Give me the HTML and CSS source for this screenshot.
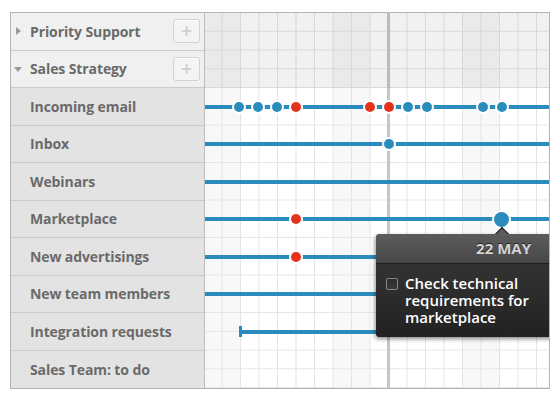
FILE: index.html
```html
<!DOCTYPE html>
<html lang="en">
<head>
  <meta charset="UTF-8">
  <title>Sales Strategy Timeline</title>
  <link rel="stylesheet" href="styles.css">
</head>
<body>
  <div class="gantt">
    <div class="sidebar">
      <div class="row group">
        <span class="caret caret-right"></span>
        <span class="label">Priority Support</span>
        <button class="add">+</button>
      </div>
      <div class="row group">
        <span class="caret caret-down"></span>
        <span class="label">Sales Strategy</span>
        <button class="add">+</button>
      </div>
      <div class="row"><span class="label">Incoming email</span></div>
      <div class="row"><span class="label">Inbox</span></div>
      <div class="row"><span class="label">Webinars</span></div>
      <div class="row"><span class="label">Marketplace</span></div>
      <div class="row"><span class="label">New advertisings</span></div>
      <div class="row"><span class="label">New team members</span></div>
      <div class="row"><span class="label">Integration requests</span></div>
      <div class="row"><span class="label">Sales Team: to do</span></div>
    </div>

    <div class="chart">
      <div class="today"></div>
      <div class="lane group"></div>
      <div class="lane group"></div>
      <div class="lane">
        <div class="bar"></div>
        <span class="dot" style="left:34px"></span>
        <span class="dot" style="left:53px"></span>
        <span class="dot" style="left:72px"></span>
        <span class="dot red" style="left:91px"></span>
        <span class="dot red" style="left:165px"></span>
        <span class="dot red" style="left:184px"></span>
        <span class="dot" style="left:203px"></span>
        <span class="dot" style="left:222px"></span>
        <span class="dot" style="left:278px"></span>
        <span class="dot" style="left:297px"></span>
      </div>
      <div class="lane">
        <div class="bar"></div>
        <span class="dot" style="left:184px"></span>
      </div>
      <div class="lane">
        <div class="bar"></div>
      </div>
      <div class="lane">
        <div class="bar"></div>
        <span class="dot red" style="left:91px"></span>
        <span class="dot big" style="left:296px"></span>
      </div>
      <div class="lane">
        <div class="bar"></div>
        <span class="dot red" style="left:91px"></span>
      </div>
      <div class="lane">
        <div class="bar"></div>
      </div>
      <div class="lane">
        <div class="bar" style="left:35px"></div>
        <span class="tick" style="left:34px"></span>
      </div>
      <div class="lane"></div>

      <div class="tooltip">
        <div class="tooltip-head">22 MAY</div>
        <label class="tooltip-body">
          <input type="checkbox">
          <span>Check technical requirements for marketplace</span>
        </label>
      </div>
    </div>
  </div>
</body>
</html>
```

FILE: styles.css
```css
html, body {margin:0; padding:0; background:#fff; font-family:"Open Sans",Arial,sans-serif;}
.gantt {display:flex; width:538px; height:375px; margin:12px 0 0 10px; border:1px solid #b4b4b4;}

.sidebar {width:193px; flex:none; display:flex; flex-direction:column; border-right:1px solid #bdbdbd; background:#e3e3e3;}
.row {height:36.5px; flex:none; display:flex; align-items:center; padding-left:19px; border-bottom:1px solid #cbcbcb; color:#6a6a6a; font-size:14px; font-weight:700; letter-spacing:-0.1px; position:relative;}
.row:last-child {border-bottom:none; height:37.5px;}
.row.group {background:#f0f0f0;}
.label {flex:1; white-space:nowrap;}
.caret {position:absolute; left:5px; top:50%; width:0; height:0;}
.caret-right {margin-top:-4px; border-left:5px solid #9a9a9a; border-top:4px solid transparent; border-bottom:4px solid transparent;}
.caret-down {margin-top:-2px; left:3px; border-top:5px solid #9a9a9a; border-left:4px solid transparent; border-right:4px solid transparent;}
.add {width:27px; height:24px; margin-right:4px; padding:0; border:1px solid #d2d2d2; border-radius:3px; background:#f4f4f4; color:#cfcfcf; font-family:"DejaVu Sans",sans-serif; font-size:15px; font-weight:700; line-height:20px; box-shadow:inset 0 1px 0 #fff;}

.chart {flex:1; position:relative; overflow:hidden; display:flex; flex-direction:column;
  background-color:#fff;
  background-image:
    linear-gradient(to right, #e4e4e4 1px, transparent 1px),
    linear-gradient(to top, #e6e6e6 1px, transparent 1px),
    linear-gradient(to right, #f8f8f8 37px, transparent 37px);
  background-size:18.5px 100%, 100% 18.75px, 129.5px 100%;
  background-position:16.5px 0, 0 0, 128px 0;}
.today {position:absolute; left:182px; top:0; bottom:0; width:3px; background:#c6c6c6;}
.lane {height:37.5px; flex:none; position:relative;}
.lane.group {background:rgba(0,0,0,0.055);}
.bar {position:absolute; left:0; right:0; top:50%; height:4px; margin-top:-2px; background:#2a8bbd;}
.dot {position:absolute; top:50%; width:10px; height:10px; margin:-5px 0 0 -5px; border-radius:50%; background:#2a8bbd; box-shadow:0 0 0 2px #fff;}
.dot.red {background:#e5321a;}
.dot.big {width:15px; height:15px; margin:-7.5px 0 0 -7.5px;}
.tick {position:absolute; top:50%; width:3px; height:11px; margin-top:-5.5px; background:#2a8bbd;}

.tooltip {position:absolute; left:171px; top:221px; width:180px; border-radius:4px; background:#262626; box-shadow:-1px 2px 4px rgba(0,0,0,0.45); color:#fff;}
.tooltip::before {content:""; position:absolute; left:121px; top:-5px; width:9px; height:9px; background:#5a5a5a; border-top:1px solid #222; border-left:1px solid #222; transform:rotate(45deg);}
.tooltip-head {position:relative; height:29px; line-height:29px; padding-right:25px; text-align:right; border-radius:4px 4px 0 0; background:linear-gradient(#5c5c5c, #474747); border-bottom:1px solid #1e1e1e; color:#d4d4d4; font-size:15px; font-weight:700; text-shadow:0 -1px 0 #222;}
.tooltip-body {display:flex; align-items:flex-start; gap:7px; padding:11px 10px 11px 10px; background:linear-gradient(#333, #222); border-radius:0 0 4px 4px; font-size:15px; font-weight:600; line-height:17px;}
.tooltip-body input {appearance:none; flex:none; width:12px; height:12px; margin:3px 0 0 0; border:1px solid #8a8a8a; border-radius:2px; background:linear-gradient(#2a2a2a, #3a3a3a);}
.tooltip-body span {width:135px;}
```
